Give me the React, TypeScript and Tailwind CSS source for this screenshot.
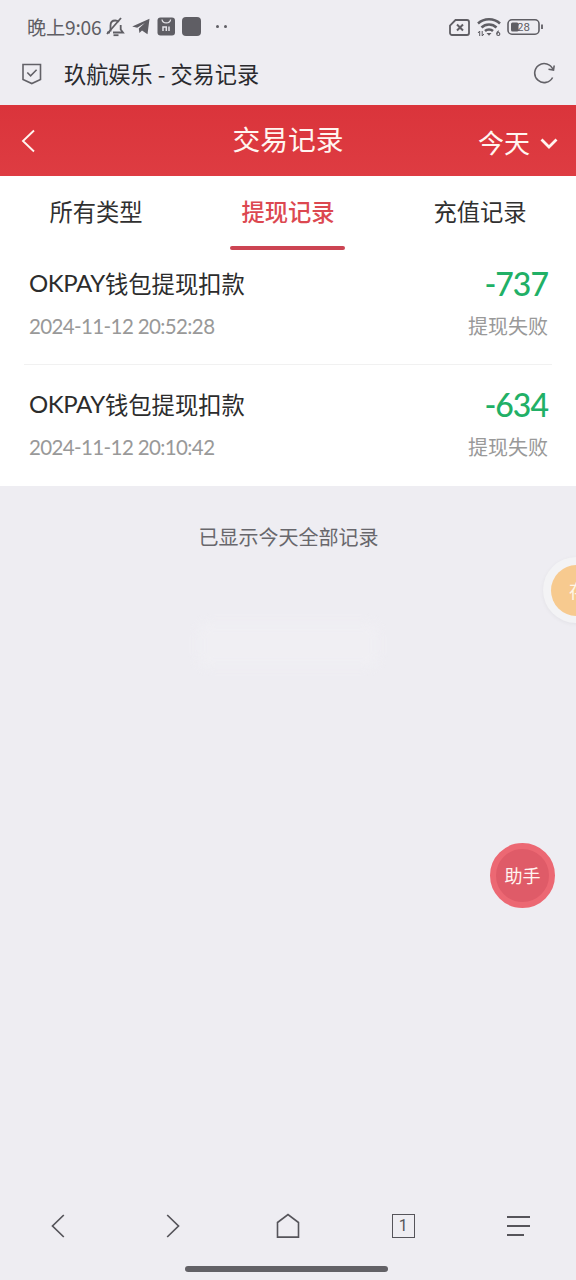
import { useState } from 'react'

type TabId = 'all' | 'withdraw' | 'deposit'

const tabs: Array<{ id: TabId; label: string }> = [
  { id: 'all', label: '所有类型' },
  { id: 'withdraw', label: '提现记录' },
  { id: 'deposit', label: '充值记录' },
]

const records = [
  { id: 1, title: 'OKPAY', name: '钱包提现扣款', time: '2024-11-12 20:52:28', amount: '-737', status: '提现失败' },
  { id: 2, title: 'OKPAY', name: '钱包提现扣款', time: '2024-11-12 20:10:42', amount: '-634', status: '提现失败' },
]

function StatusBar() {
  return (
    <div className="flex h-[54px] items-center justify-between pl-[27px] pr-[32px] text-[#5f5e64]">
      <div className="flex items-center">
        <span className="w-[75px] whitespace-nowrap text-[19.200px] tracking-[-0.200px]">晚上9:06</span>
        {/* muted bell */}
        <svg className="ml-[4px]" width="19" height="20" viewBox="0 0 19 20" fill="none" stroke="currentColor" strokeWidth="1.800">
          <path d="M4.500 14.500V8.500c0-3 2-5 4.800-5 1.500 0 2.600.500 3.500 1.400M14.700 8v4.500l2.300 3H7" />
          <path d="M7.500 18.200h5" />
          <path d="M1 17L15 1" />
          <path d="M1 15.500h3" />
        </svg>
        {/* telegram plane */}
        <svg className="ml-[7px]" width="18" height="17" viewBox="0 0 18 17" fill="currentColor">
          <path d="M.200 8.500L17.500.800 15.500 16.200l-5.500-3.700-2.600 2.400-.6-4.500 6-5.400-7.600 4.700z" />
        </svg>
        <svg className="ml-[7px]" width="19" height="19" viewBox="0 0 19 19">
          <rect x=".5" y=".5" width="17.500" height="18" rx="3" fill="currentColor" />
          <path d="M5 2.500c.6 4.500 8 4.500 8.600 0" fill="none" stroke="#e5e4e9" strokeWidth="1.300" />
          <path d="M6 14V10h3.300v4M12 9.500V14" fill="none" stroke="#e5e4e9" strokeWidth="1.500" />
        </svg>
        <span className="ml-[6px] h-[19px] w-[19px] rounded-[4px] bg-[#5f5e64]" />
        <span className="ml-[15px] h-[3px] w-[3px] rounded-full bg-[#5f5e64]" />
        <span className="ml-[5px] h-[3px] w-[3px] rounded-full bg-[#5f5e64]" />
      </div>

      <div className="flex items-center">
        {/* no sim */}
        <svg width="21" height="17" viewBox="0 0 21 17" fill="none" stroke="currentColor" strokeWidth="1.800">
          <path d="M6.500 1H18a2 2 0 0 1 2 2v11a2 2 0 0 1-2 2H3a2 2 0 0 1-2-2V6.500z" />
          <path d="M8 5.500l6 6M14 5.500l-6 6" strokeWidth="2" />
        </svg>
        <svg className="ml-[7px]" width="24" height="20" viewBox="0 0 24 20" fill="none" stroke="currentColor" strokeWidth="2.500">
          <path d="M1 6.500c6-5.600 16-5.600 22 0" />
          <path d="M4.500 10.500c4-4 11-4 15 0" />
          <path d="M8 14c2.200-2.100 5.800-2.100 8 0" />
          <path d="M9.500 16h5L12 18.800z" fill="currentColor" stroke="none" />
          <path d="M2.700 19v-5L1 16M5.200 14v5l1.700-2" strokeWidth="1" />
          <path d="M21.800 13.800c-1.300.6-2 1.800-2 3.200" strokeWidth="1.200" />
          <circle cx="21.300" cy="17" r="1.500" strokeWidth="1.200" />
        </svg>
        <svg className="ml-[6px]" width="37" height="18" viewBox="0 0 37 18">
          <rect x="1" y="1.800" width="31" height="14.400" rx="4" fill="none" stroke="currentColor" strokeWidth="1.600" />
          <rect x="4" y="4.500" width="7.500" height="9" rx="1.500" fill="currentColor" />
          <path d="M35 6.500v4.500" stroke="currentColor" strokeWidth="1.800" />
          <text x="10" y="13.200" fontSize="11.500" fontFamily="Roboto, sans-serif" fill="currentColor">28</text>
        </svg>
      </div>
    </div>
  )
}

function BrowserBar() {
  return (
    <div className="flex h-[51px] items-center pl-[22px] pr-[20px] pb-[11px] text-[#626167]">
      <svg width="20" height="22" viewBox="0 0 20 22" fill="none" stroke="currentColor" strokeWidth="1.600">
        <path d="M1 1.500h17.500v15L9.800 20.500 1 16.500z" />
        <path d="M5.300 9.500l3.300 3.300 6-6" />
      </svg>
      <h1 className="ml-[22px] flex-1 text-[22.200px] text-[#2a2a2e]">玖航娱乐 - 交易记录</h1>
      <svg className="-mt-[3px]" width="23" height="22" viewBox="0 0 23 22" fill="none" stroke="currentColor" strokeWidth="1.600">
        <path d="M19.600 15.500A9.500 9.500 0 1 1 20 7.500" />
        <path d="M21.200 3.500l-.7 4.600-5-.8" />
      </svg>
    </div>
  )
}

function BottomNav() {
  return (
    <nav className="grid h-[90px] shrink-0 grid-cols-5 text-[#55545a]">
      <button className="flex h-[72px] items-center justify-center" aria-label="后退">
        <svg width="14" height="24" viewBox="0 0 14 24" fill="none" stroke="currentColor" strokeWidth="1.700">
          <path d="M12.800 1L1.500 12l11.300 11" />
        </svg>
      </button>
      <button className="flex h-[72px] items-center justify-center" aria-label="前进">
        <svg width="14" height="24" viewBox="0 0 14 24" fill="none" stroke="currentColor" strokeWidth="1.700">
          <path d="M1.200 1l11.300 11L1.200 23" />
        </svg>
      </button>
      <button className="flex h-[72px] items-center justify-center" aria-label="主页">
        <svg width="24" height="26" viewBox="0 0 24 26" fill="none" stroke="currentColor" strokeWidth="1.600">
          <path d="M1.500 9.500L12 1.500l10.500 8v14.600h-21z" />
        </svg>
      </button>
      <button className="flex h-[72px] items-center justify-center" aria-label="标签页">
        <span className="flex h-[24px] w-[23px] items-center justify-center border-[1.500px] border-[#55545a] font-['Roboto',sans-serif] text-[16px]">1</span>
      </button>
      <button className="flex h-[72px] items-center justify-center" aria-label="菜单">
        <svg width="23" height="22" viewBox="0 0 23 22" stroke="currentColor" strokeWidth="1.800">
          <path d="M0 2h23M0 11h23M0 20h17" />
        </svg>
      </button>
    </nav>
  )
}

export default function App() {
  const [activeTab, setActiveTab] = useState<TabId>('withdraw')

  return (
    <div className="relative flex h-[1280px] w-[576px] flex-col overflow-hidden bg-[#eeedf2] font-['Noto_Sans_CJK_SC',sans-serif]">
      <StatusBar />
      <BrowserBar />

      <header className="grid h-[71px] shrink-0 grid-cols-3 items-center bg-linear-to-b from-[#da343b] to-[#de3c42] pl-[21px] pr-[18px] text-[#fff5f0]">
        <button aria-label="返回">
          <svg width="15" height="24" viewBox="0 0 15 24" fill="none" stroke="currentColor" strokeWidth="1.900">
            <path d="M13 1.500L2 12l11 10.500" />
          </svg>
        </button>
        <h2 className="-ml-[3px] pb-[3px] text-center text-[27.800px] whitespace-nowrap">交易记录</h2>
        <button className="mt-[2px] flex items-center justify-end text-[26px]">
          <span>今天</span>
          <svg className="ml-[10px] mt-[5px]" width="18" height="12" viewBox="0 0 18 12" fill="none" stroke="currentColor" strokeWidth="2.800">
            <path d="M1.500 1.500l7.500 7.500 7.500-7.500" />
          </svg>
        </button>
      </header>

      <main className="shrink-0 bg-white">
        <div className="grid h-[68px] grid-cols-3">
          {tabs.map((tab) => (
            <button
              key={tab.id}
              onClick={() => setActiveTab(tab.id)}
              className={`relative flex items-center justify-center pt-[3px] text-[23.300px] ${
                activeTab === tab.id ? 'font-medium text-[#dc4850]' : 'text-[#303030]'
              }`}
            >
              {tab.label}
              {activeTab === tab.id && (
                <span className="absolute -bottom-[6px] left-[38px] h-[4px] w-[115px] rounded-full bg-[#cc4452]" />
              )}
            </button>
          ))}
        </div>

        <ul className="px-[24px]">
          {records.map((record) => (
            <li key={record.id} className="flex h-[121px] justify-between border-b border-[#f1f1f1] pt-[23px] pl-[5px] pr-[4px] last:border-0">
              <div>
                <p className="flex text-[23.300px] leading-[32px] text-[#2c2c2c]">
                  <span className="w-[76px] font-['Lato',sans-serif] text-[24px] tracking-[-0.400px]">{record.title}</span>
                  <span>{record.name}</span>
                </p>
                <p className="mt-[13px] font-['Lato',sans-serif] text-[20.500px] leading-[28px] tracking-[-0.620px] text-[#999]">{record.time}</p>
              </div>
              <div className="text-right">
                <p className="font-['Lato',sans-serif] text-[32px] font-medium leading-[34px] tracking-[-1px] text-[#21b066]">{record.amount}</p>
                <p className="mt-[11px] text-[20px] leading-[28px] text-[#999]">{record.status}</p>
              </div>
            </li>
          ))}
        </ul>
      </main>

      <p className="mt-[36px] pl-px text-center text-[20px] leading-[30px] text-[#68676c]">已显示今天全部记录</p>
      <div className="mx-auto mt-[71px] h-[44px] w-[180px] rounded-[10px] bg-[#f1f0f4] opacity-70 blur-[5px]" />
      <div className="flex-1" />

      <BottomNav />

      {/* floating shortcuts */}
      <div className="absolute left-[543px] top-[557px] flex h-[66px] w-[66px] items-center justify-center rounded-full bg-[#f3f3f5] shadow-[0_1px_4px_rgba(0,0,0,0.05)]">
        <div className="flex h-[51px] w-[51px] items-center justify-center rounded-full bg-[#f7ca8f] text-[18px] text-[#fff6e8]">
          <span className="pl-[4px] whitespace-nowrap">存</span>
        </div>
      </div>
      <button className="absolute left-[490px] top-[843px] flex h-[65px] w-[65px] items-center justify-center rounded-full border-[6px] border-[#ec6873] bg-[#df5b68] text-[18px] text-[#fff5f2]">
        助手
      </button>
      <div className="absolute bottom-[8px] left-[185px] h-[6px] w-[203px] rounded-full bg-[#626166]" />
    </div>
  )
}
